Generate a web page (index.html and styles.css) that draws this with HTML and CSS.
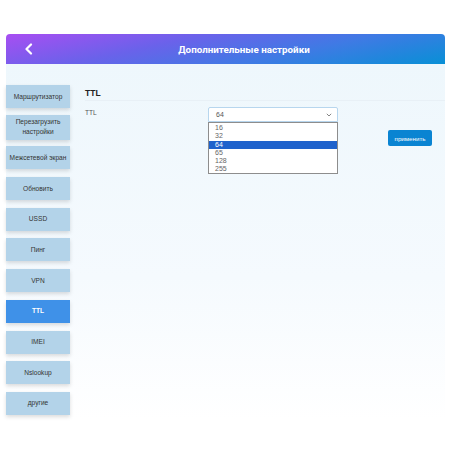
FILE: index.html
```html
<!DOCTYPE html>
<html lang="ru">
<head>
<meta charset="utf-8">
<link rel="stylesheet" href="styles.css">
</head>
<body>
<div class="app">
  <header class="topbar">
    <span class="back">
      <svg width="10" height="12" viewBox="0 0 10 12"><path d="M7 1.5 L2.5 6 L7 10.5" fill="none" stroke="#fff" stroke-width="2.2" stroke-linecap="round" stroke-linejoin="round"/></svg>
    </span>
    <h1 class="title">Дополнительные настройки</h1>
  </header>
  <main class="body">
    <nav class="side">
      <button class="nav">Маршрутизатор</button>
      <button class="nav tall">Перезагрузить настройки</button>
      <button class="nav">Межсетевой экран</button>
      <button class="nav">Обновить</button>
      <button class="nav">USSD</button>
      <button class="nav">Пинг</button>
      <button class="nav">VPN</button>
      <button class="nav active">TTL</button>
      <button class="nav">IMEI</button>
      <button class="nav">Nslookup</button>
      <button class="nav">другие</button>
    </nav>
    <section class="content">
      <h2 class="heading">TTL</h2>
      <div class="row">
        <span class="label">TTL</span>
        <div class="selectwrap">
          <div class="select">
            <span>64</span>
            <svg width="6" height="4" viewBox="0 0 6 4"><path d="M0.8 0.8 L3 3 L5.2 0.8" fill="none" stroke="#777" stroke-width="0.9"/></svg>
          </div>
          <ul class="list">
            <li>16</li>
            <li>32</li>
            <li class="sel">64</li>
            <li>65</li>
            <li>128</li>
            <li>255</li>
          </ul>
        </div>
        <button class="apply">применить</button>
      </div>
    </section>
  </main>
</div>
</body>
</html>
```
FILE: styles.css
```css
html, body {
  margin: 0;
  padding: 0;
  background: #fff;
  width: 450px;
  height: 450px;
  overflow: hidden;
}
.app {
  margin: 34px 0 0 6px;
  width: 439px;
  font-family: "Liberation Sans", Arial, sans-serif;
}
.topbar {
  height: 30px;
  border-radius: 4px 4px 0 0;
  background: linear-gradient(168deg, #a84ef2 0%, #6a62ea 35%, #3f7ae4 65%, #0890d6 100%);
  display: flex;
  align-items: center;
}
.back {
  display: flex;
  margin-left: 18px;
  width: 10px;
}
.title {
  flex: 1;
  margin: 0;
  padding-left: 9px;
  text-align: center;
  color: #fff;
  font-family: Roboto, "Open Sans", sans-serif;
  font-weight: 700;
  font-size: 9.8px;
}
.body {
  height: 356px;
  background: linear-gradient(180deg, #eef7fc 0%, #f5fafe 60%, #ffffff 100%);
  display: flex;
  padding-top: 21px;
  box-sizing: border-box;
}
.side {
  display: flex;
  flex-direction: column;
  gap: 7.7px;
  width: 64px;
}
.nav {
  width: 64px;
  height: 23px;
  border: 0;
  padding: 0;
  background: #b3d3e9;
  color: #333;
  font-family: "Liberation Sans", Arial, sans-serif;
  font-size: 6.6px;
  line-height: 10px;
  box-shadow: 0 2px 4px rgba(0, 0, 0, 0.14);
}
.nav.tall {
  height: 25px;
  margin-bottom: -1px;
  margin-top: -1px;
}
.nav.active {
  background: #3f91e8;
  color: #fff;
  font-weight: 700;
}
.content {
  flex: 1;
  margin-left: 15px;
}
.heading {
  margin: 0;
  font-size: 8.5px;
  font-weight: 700;
  color: #222;
  padding: 3px 0 2px;
  border-bottom: 1px solid #e8f0f6;
  line-height: 10px;
}
.row {
  display: flex;
  align-items: flex-start;
  margin-top: 6px;
}
.label {
  width: 123px;
  font-size: 6.6px;
  color: #555;
  padding-top: 2px;
}
.selectwrap {
  width: 130px;
}
.select {
  height: 15px;
  box-sizing: border-box;
  border: 1px solid #b7d6ee;
  border-radius: 2px 2px 0 0;
  background: #fff;
  display: flex;
  align-items: center;
  justify-content: space-between;
  padding: 0 5px 0 7px;
  font-size: 7px;
  color: #555;
}
.list {
  list-style: none;
  margin: 0;
  padding: 1px 0;
  border: 1px solid #8d8d8d;
  background: #fff;
  box-sizing: border-box;
  height: 52px;
}
.list li {
  height: 8.3px;
  line-height: 8.3px;
  font-size: 7px;
  color: #666;
  padding-left: 6px;
}
.list li.sel {
  background: #1f62cc;
  color: #fff;
}
.apply {
  margin: 23px 0 0 50px;
  width: 44px;
  height: 16px;
  border: 0;
  border-radius: 2px;
  background: #0a84d2;
  color: #fff;
  font-family: "Liberation Sans", Arial, sans-serif;
  font-size: 6.2px;
  padding: 0;
}
```
